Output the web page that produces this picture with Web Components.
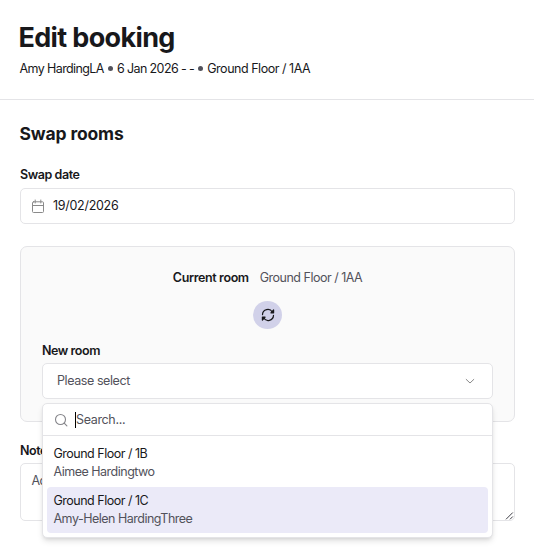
<!DOCTYPE html>
<html lang="en">
<head>
<meta charset="utf-8">
<title>Edit booking</title>
<style>
    body {
        margin: 0;
        height: 547px;
        overflow: hidden;
        background: #fff;
        color: #18181b;
        font: 400 12.5px/18px Inter, "Liberation Sans", sans-serif;
        letter-spacing: -0.5px;
        --line: #e4e4e7;
        --muted: #52525b;
    }
</style>
</head>
<body>
<booking-header>
    <span slot="title">Edit booking</span>
    <span slot="guest">Amy HardingLA</span>
    <span slot="dates">6 Jan 2026 - -</span>
    <span slot="room">Ground Floor / 1AA</span>
</booking-header>
<swap-form></swap-form>

<script>
const define = (name, html) => {
    const template = document.createElement("template")
    template.innerHTML = html

    customElements.define(name, class extends HTMLElement {
        constructor() {
            super()

            this.attachShadow({ mode: "open" })
            this.shadowRoot.appendChild(template.content.cloneNode(true))
        }
    })
}

define("booking-header", `
    <style>
    :host {
        display: block;
        box-sizing: border-box;
        height: 100px;
        padding: 20px 19.5px 0;
        border-bottom: 1px solid var(--line);
    }
    h1 {
        margin: 0 0 0 -1px;
        font-size: 27px;
        line-height: 36px;
        font-weight: 700;
        letter-spacing: -0.65px;
    }
    .meta {
        display: flex;
        align-items: center;
        margin-top: 4px;
        letter-spacing: -0.6px;
    }
    .room {
        letter-spacing: -0.47px;
    }
    .dot {
        width: 5px;
        height: 5px;
        margin: -2px 4px 0;
        border-radius: 50%;
        background: var(--muted);
    }
    </style>
    <h1><slot name="title"></slot></h1>
    <div class="meta">
        <slot name="guest"></slot>
        <span class="dot"></span>
        <slot name="dates"></slot>
        <span class="dot"></span>
        <span class="room"><slot name="room"></slot></span>
    </div>
`)

define("form-field", `
    <style>
    :host {
        display: block;
    }
    .label {
        height: 18px;
        margin-bottom: 4px;
        font-weight: 600;
        letter-spacing: -0.43px;
    }
    </style>
    <div class="label"><slot name="label"></slot></div>
    <slot></slot>
`)

define("date-input", `
    <style>
    :host {
        display: flex;
        align-items: center;
        box-sizing: border-box;
        height: 36px;
        padding: 0 10px;
        gap: 8px;
        border: 1px solid var(--line);
        border-radius: 5px;
        background: #fff;
        letter-spacing: -0.28px;
    }
    svg {
        display: block;
        color: #8a8a8a;
    }
    span {
        padding-bottom: 1px;
    }
    </style>
    <svg width="14" height="15" viewBox="0 0 14 15" fill="none" stroke="currentColor" stroke-linecap="round" stroke-linejoin="round">
        <rect x="1.5" y="2.8" width="11" height="10.7" rx="1"/>
        <path d="M1.5 6.5h11M4.2 1v3M9.8 1v3"/>
    </svg>
    <span><slot></slot></span>
`)

define("swap-badge", `
    <style>
    :host {
        display: flex;
        align-items: center;
        justify-content: center;
        width: 29px;
        height: 28px;
        border-radius: 50%;
        background: #d1d1e9;
    }
    </style>
    <svg width="14" height="14" viewBox="0 0 14 14" fill="none" stroke="#18181b" stroke-width="1.2" stroke-linecap="round" stroke-linejoin="round">
        <path d="M1.5 6.6A5.3 5.3 0 0 1 11.4 4.2M12.5 7.4A5.3 5.3 0 0 1 2.6 9.8"/>
        <path fill="#18181b" d="M12.6 2v2.8H9.9zM1.4 12V9.2h2.7z"/>
    </svg>
`)

define("room-option", `
    <style>
    :host {
        display: block;
        box-sizing: border-box;
        height: 46px;
        padding: 5px 6.5px;
        border-radius: 4px;
    }
    :host([active]) {
        background: #ebeaf8;
    }
    .guest {
        color: var(--muted);
    }
    </style>
    <div class="room"><slot name="room"></slot></div>
    <div class="guest"><slot name="guest"></slot></div>
`)

define("room-select", `
    <style>
    :host {
        display: block;
        position: relative;
    }
    .trigger {
        display: flex;
        align-items: center;
        justify-content: space-between;
        box-sizing: border-box;
        height: 36px;
        padding: 0 16px 0 14px;
        border: 1px solid var(--line);
        border-radius: 5px;
        background: #fff;
        color: var(--muted);
        letter-spacing: -0.42px;
    }
    .menu {
        position: absolute;
        z-index: 1;
        top: 40px;
        left: 0;
        right: 0;
        box-sizing: border-box;
        height: 135px;
        border: 1px solid var(--line);
        border-radius: 5px;
        background: #fff;
        box-shadow: 0 4px 6px -1px rgba(0, 0, 0, .12), 0 2px 4px -2px rgba(0, 0, 0, .12);
    }
    .search {
        display: flex;
        align-items: center;
        height: 31px;
        padding: 0 11px;
        border-bottom: 1px solid var(--line);
        color: var(--muted);
        letter-spacing: -0.35px;
    }
    .caret {
        width: 1px;
        height: 16px;
        margin-left: 7px;
        background: #000;
    }
    .options {
        display: flex;
        flex-direction: column;
        gap: 1px;
        padding: 4px;
    }
    svg {
        display: block;
    }
    </style>
    <div class="trigger">
        <slot name="value"></slot>
        <svg width="12" height="8" viewBox="0 0 12 8" fill="none" stroke="#8a8a8a" stroke-linecap="round" stroke-linejoin="round">
            <path d="M2.2 2.4L6 6l3.8-3.6"/>
        </svg>
    </div>
    <div class="menu">
        <div class="search">
            <svg width="14" height="14" viewBox="0 0 14 14" fill="none" stroke="#85858a" stroke-width="1.1" stroke-linecap="round">
                <circle cx="6.5" cy="6.5" r="5"/>
                <path d="M10.2 10.2l2.7 2.7"/>
            </svg>
            <span class="caret"></span>
            <span>Search...</span>
        </div>
        <div class="options"><slot></slot></div>
    </div>
`)

define("notes-input", `
    <style>
    :host {
        display: flex;
        justify-content: space-between;
        box-sizing: border-box;
        height: 58px;
        padding: 8px 0 0 10.5px;
        border: 1px solid var(--line);
        border-radius: 5px;
        background: #fff;
        color: var(--muted);
    }
    svg {
        align-self: flex-end;
    }
    </style>
    <span><slot></slot></span>
    <svg width="10" height="10" viewBox="0 0 10 10" stroke="#3f3f46" stroke-width="1">
        <path d="M2 9.3l6.8-6.8M6 9.3l2.8-2.8"/>
    </svg>
`)

define("swap-form", `
    <style>
    :host {
        display: block;
        padding: 22px 19px 0 20px;
    }
    h2 {
        height: 24px;
        margin: 0 0 20px -0.5px;
        font-size: 17.5px;
        line-height: 24px;
        font-weight: 700;
        letter-spacing: -0.15px;
    }
    .card {
        box-sizing: border-box;
        height: 176px;
        margin: 22px 0 19px;
        padding: 22px 21px 0;
        border: 1px solid var(--line);
        border-radius: 7px;
        background: #fafafa;
    }
    .current {
        display: flex;
        justify-content: center;
        gap: 11px;
    }
    .current b {
        font-weight: 600;
        letter-spacing: -0.37px;
    }
    .current span {
        color: var(--muted);
    }
    swap-badge {
        margin: 14px auto 12px;
    }
    .new-room span[slot="label"] {
        position: relative;
        top: 1px;
    }
    </style>
    <h2>Swap rooms</h2>
    <form-field>
        <span slot="label">Swap date</span>
        <date-input>19/02/2026</date-input>
    </form-field>
    <div class="card">
        <div class="current"><b>Current room</b><span>Ground Floor / 1AA</span></div>
        <swap-badge></swap-badge>
        <form-field class="new-room">
            <span slot="label">New room</span>
            <room-select>
                <span slot="value">Please select</span>
                <room-option>
                    <span slot="room">Ground Floor / 1B</span>
                    <span slot="guest">Aimee Hardingtwo</span>
                </room-option>
                <room-option active>
                    <span slot="room">Ground Floor / 1C</span>
                    <span slot="guest">Amy-Helen HardingThree</span>
                </room-option>
            </room-select>
        </form-field>
    </div>
    <form-field class="new-room">
        <span slot="label">Notes</span>
        <notes-input>Add</notes-input>
    </form-field>
`)
</script>
</body>
</html>
